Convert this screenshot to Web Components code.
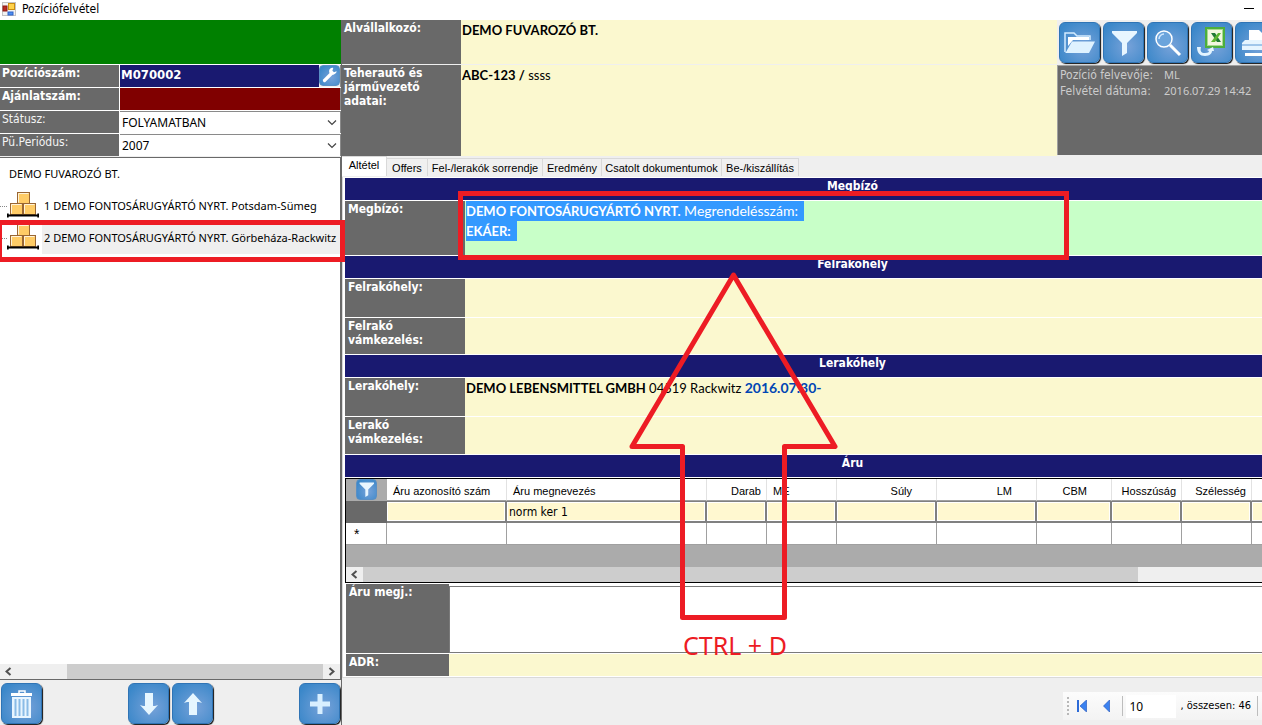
<!DOCTYPE html>
<html lang="hu">
<head>
<meta charset="utf-8">
<title>Pozíciófelvétel</title>
<style>
  html, body { margin: 0; height: 100%; }
  body { background: #efefef; overflow: hidden; }
  position-window {
    --label: #696969; --navy: #191970; --cream: #fbf8cf; --mint: #c8ffc8; --red: #ed1c24;
    --tahoma: "DejaVu Sans Condensed", "Noto Sans", sans-serif;
    --segoe: "Noto Sans", "Open Sans", sans-serif;
    --calibri: Lato, "Open Sans", sans-serif;
    --system: "Liberation Sans", Arial, sans-serif;
  }
</style>
</head>
<body>
<position-window></position-window>

<script>
const define = (name, html, setup) => {
  const template = document.createElement('template');
  template.innerHTML = `<style>*{box-sizing:border-box}</style>${html}`;
  customElements.define(name, class extends HTMLElement {
    constructor() {
      super();
      this.attachShadow({ mode: 'open' }).append(template.content.cloneNode(true));
    }
    connectedCallback() { if (setup) setup(this, this.shadowRoot); }
  });
};

/* Title bar */
define('title-bar', `
<style>
  :host { display: flex; align-items: center; gap: 6px; height: 20px; padding: 0 7px 2px 2px; background: #fff; color: #000; font: 12px/16px var(--tahoma); }
  span { flex: 1; }
  button { border: 0; padding: 0; background: none; width: 12px; height: 16px; display: grid; place-items: center; }
</style>
<svg width="14" height="14" viewBox="0 0 14 14" aria-hidden="true">
  <rect x=".5" y=".5" width="13" height="13" fill="#f2f2f2" stroke="#c3c3c3"/>
  <rect x="6.5" y="1.5" width="6" height="6" fill="#ffd24a" stroke="#c98c10"/>
  <rect x="1" y="4" width="4" height="5" fill="#b8281f" stroke="#8c1a14"/>
  <rect x="6" y="10" width="5" height="3" fill="#4f8ff0" stroke="#2c62c9"/>
</svg>
<span>Pozíciófelvétel</span>
<button aria-label="Kis méret"><svg width="10" height="2"><path d="M0 .5h10" stroke="#000"/></svg></button>`);

/* Glossy blue icon button */
define('icon-button', `
<style>
  :host { display: block; flex: none; width: 42px; height: 42px; padding: 0 1px 1px 0; }
  :host([small]) { width: 21px; height: 21px; padding: 0; }
  button { display: grid; place-items: center; width: 100%; height: 100%; padding: 0; border: 1px solid #2f74b5; border-radius: 6px;
    background: radial-gradient(circle at 60% 60%, #77a2d9, #3a87c9 85%); box-shadow: 1px 1px 1px #111; }
  :host([small]) button { border-radius: 4px; border-color: #5a8fc4; box-shadow: none; }
</style>
<button><slot></slot></button>`, (el, root) => root.querySelector('button').setAttribute('aria-label', el.getAttribute('label')));

/* Position header form */
define('position-form', `
<style>
  :host { display: block; background: #fff; color: #fff; }
  .banner { height: 44px; background: #008000; }
  form { display: grid; grid-template-columns: 119px 1fr; gap: 1px; padding-top: 1px; margin: 0; grid-auto-rows: 22px; }
  label { background: var(--label); padding-left: 2px; font: 12px/16px var(--tahoma); color: #f4f4f4; }
  label.strong { font-weight: bold; color: #fff; }
  .cell { display: flex; background: #efefef; min-width: 0; border-right: 1px solid #8a8a8a; }
  input { flex: 1; min-width: 0; border: 0; padding: 0 1px 2px; background: var(--navy); color: #fff; font: bold 13px/20px var(--tahoma); }
  input.quote { background: #800000; }
  .pick { display: grid; background: #fff; border: solid #8a8a8a; border-width: 1px 1px 0 0; }
  .pick > * { grid-area: 1 / 1; }
  .pick svg { place-self: center end; margin-right: 3px; pointer-events: none; }
  select { appearance: none; border: 0; background: none; padding: 0 2px; color: #000; font: 12px/20px var(--segoe); }
</style>
<div class="banner"></div>
<form>
  <label class="strong" for="pos">Pozíciószám:</label>
  <div class="cell"><input id="pos" value="M070002">
    <icon-button small label="Beállítás"><svg width="17" height="17" viewBox="0 0 17 17"><path d="M3.5 13.5l7-7" stroke="#fff" stroke-width="3.2" stroke-linecap="round"/><path d="M15.6 4.3l-2.6 1-1.6-1.5.9-2.8c-2-.6-4.3.8-4.2 3.2c0 2.5 2.5 4.1 4.8 3.3c1.8-.6 2.7-2 2.7-3.2z" fill="#fff"/></svg></icon-button></div>
  <label class="strong" for="quote">Ajánlatszám:</label>
  <div class="cell"><input class="quote" id="quote"></div>
  <label for="status">Státusz:</label>
  <div class="pick"><select id="status"><option>FOLYAMATBAN</option></select><svg width="10" height="6"><path d="M1 .5l4 4 4-4" fill="none" stroke="#444" stroke-width="1.2"/></svg></div>
  <label for="period">Pü.Periódus:</label>
  <div class="pick"><select id="period"><option>2007</option></select><svg width="10" height="6"><path d="M1 .5l4 4 4-4" fill="none" stroke="#444" stroke-width="1.2"/></svg></div>
</form>`);

/* Horizontal scroll bar */
define('scroll-strip', `
<style>
  :host { display: grid; height: 15px; background: #efefef; align-items: center; grid-template-columns: 17px var(--before, 0px) 1fr var(--after, 0px) auto; }
  .thumb { grid-column: 3; height: 100%; background: #cdcdcd; }
  svg { justify-self: center; }
  .right { grid-column: 5; width: 17px; display: grid; }
  :host([open-end]) .right { display: none; }
</style>
<svg width="7" height="9"><path d="M5.5 1l-4 3.5 4 3.5" fill="none" stroke="#505050" stroke-width="2"/></svg>
<div class="thumb"></div>
<div class="right"><svg width="7" height="9"><path d="M1.5 1l4 3.5-4 3.5" fill="none" stroke="#505050" stroke-width="2"/></svg></div>`);

/* One line of the cargo tree */
define('cargo-item', `
<style>
  :host { display: grid; grid-template-columns: 7px 32px 1fr; column-gap: 0; height: 32px; align-items: center; white-space: nowrap; }
  i { border-top: 1px dotted #888; width: 7px; }
  svg { align-self: start; }
  span { height: 100%; line-height: 32px; margin-left: 3px; padding-left: 2px; }
  :host([selected]) span { background: #efefef; }
</style>
<i></i>
<svg width="32" height="28" viewBox="0 0 32 28" aria-hidden="true">
  <g fill="#ffcc66" stroke="#996633"><rect x="10.5" y="2.5" width="12" height="11"/><rect x="3.5" y="13.5" width="12" height="11"/><rect x="16.5" y="13.5" width="12" height="11"/></g>
  <g fill="none" stroke="#fff3d8"><path d="M11.5 12.5v-9h10M4.5 23.5v-9h10M17.5 23.5v-9h10"/></g>
  <path d="M.8 23.5v4M31.2 23.5v4M0 25.5h32" stroke="#000" stroke-width="1.8"/>
</svg>
<span><slot></slot></span>`);

define('cargo-tree', `
<style>
  :host { display: flex; flex-direction: column; background: #fff; border: solid #696969; border-width: 1px 1px 1px 0; font: 11px/16px var(--segoe); color: #000; overflow: hidden; --before: 50px; }
  .root { height: 32px; line-height: 32px; padding-left: 9px; }
  .list { flex: 1; }
</style>
<div class="list">
  <div class="root">DEMO FUVAROZÓ BT.</div>
  <cargo-item>1 DEMO FONTOSÁRUGYÁRTÓ NYRT. Potsdam-Sümeg</cargo-item>
  <cargo-item selected>2 DEMO FONTOSÁRUGYÁRTÓ NYRT. Görbeháza-Rackwitz</cargo-item>
</div>
<scroll-strip></scroll-strip>`);

define('tree-actions', `
<style>
  :host { display: flex; align-items: flex-start; height: 44px; padding: 2px 0 0 1px; background: #efefef; gap: 2px; }
  .gap { flex: 1; }
</style>
<icon-button label="Törlés"><svg width="22" height="28" viewBox="0 0 22 28"><path d="M8 3.5V1h6v2.5" fill="none" stroke="#fff" stroke-width="1.5"/><rect y="3" width="21" height="3" fill="#fff"/><rect x="1" y="7" width="19" height="21" fill="#e8f5ff"/><path d="M4.5 9v17M8.5 9v17M12.5 9v17M16.5 9v17" stroke="#8abbe6" stroke-width="2"/></svg></icon-button>
<span class="gap"></span>
<icon-button label="Le"><svg width="18" height="24" viewBox="0 0 18 24"><path d="M5 1h8v13c2 0 4-.6 5-1L9 23 0 13c1 .4 3 1 5 1z" fill="#e6f6ff"/></svg></icon-button>
<icon-button label="Fel"><svg width="18" height="24" viewBox="0 0 18 24"><path d="M5 23h8V10c2 0 4 .6 5 1L9 1 0 11c1-.4 3-1 5-1z" fill="#e6f6ff"/></svg></icon-button>
<span class="gap"></span>
<icon-button label="Új"><svg width="20" height="20"><path d="M7.5 0h5v7.5H20v5h-7.5V20h-5v-7.5H0v-5h7.5z" fill="#d8efff"/></svg></icon-button>`);

/* Subcontractor block */
define('carrier-info', `
<style>
  :host { display: grid; grid-template-columns: 119px 1fr; grid-template-rows: 44px 91px; row-gap: 1px; background: #efefef; }
  .label { background: var(--label); color: #fff; font: bold 12px/14px var(--tahoma); padding: 1px 2px; }
  .value { background: var(--cream); color: #000; font: 13px/20px var(--calibri); padding: 0 1px; white-space: pre; }
</style>
<div class="label">Alvállalkozó:</div><div class="value"><b>DEMO FUVAROZÓ BT.</b></div>
<div class="label">Teherautó és járművezető adatai:</div><div class="value"><b>ABC-123 /</b> ssss</div>`);

define('record-tools', `
<style>
  :host { display: grid; grid-template-rows: 44px 91px; row-gap: 1px; background: #efefef; overflow: hidden; }
  .bar { display: flex; gap: 2px; padding: 2px; }
  dl { display: grid; grid-template-columns: 101px 1fr; grid-auto-rows: 16px; margin: 0 0 1px; padding: 1px 2px; background: var(--label); border: solid #a0a0a0; border-width: 1px 0 0 1px; color: #ccc; font: 12px/16px var(--tahoma); white-space: nowrap; }
  dt, dd { margin: 0; } dd { font: 11px/16px var(--segoe); padding-left: 3px; }
</style>
<div class="bar">
  <icon-button label="Megnyitás"><svg width="32" height="22" viewBox="0 0 32 22"><path d="M1 20V1h9l3 3h13v4" fill="none" stroke="#d3ecff" stroke-width="1.5"/><path d="M4 14V5h21v3H9z" fill="#fff"/><path d="M2 20L8 9.5h23L25 21H1z" fill="#dff2ff"/></svg></icon-button>
  <icon-button label="Szűrés"><svg width="26" height="26" viewBox="0 0 26 26"><path d="M1 1h25v2L16 13v10l-5 3V13L1 3z" fill="#e8f6ff"/></svg></icon-button>
  <icon-button label="Keresés"><svg width="28" height="28" viewBox="0 0 28 28"><circle cx="10" cy="10" r="8" fill="#6ba4dc" stroke="#fff" stroke-width="1.5"/><path d="M5 10a5 5 0 0 1 5-5" fill="none" stroke="#cfe8ff" stroke-width="1.5"/><path d="M16 16l10 10" stroke="#fff" stroke-width="3"/></svg></icon-button>
  <icon-button label="Excel export"><svg width="30" height="32" viewBox="0 0 30 32"><rect x="9" y="1" width="18" height="19" fill="#f1f7df" stroke="#4caf3c" stroke-width="2"/><rect x="10.5" y="2.5" width="15" height="16" fill="none" stroke="#a8d98e"/><path d="M14 6h4l6 9h-4z" fill="#1f7a34"/><path d="M21 6h3l-6 9h-4z" fill="#5cb531"/><path d="M0 20c0 6 3 9 8 9 5 0 7-3 7-5h2l-1-4-6 3 2 1c0 1-1 2-4 2-4 0-5-2-4-6z" fill="#e3f4ff"/></svg></icon-button>
  <icon-button label="Nyomtatás"><svg width="30" height="28" viewBox="0 0 30 28"><path d="M8 11V1h10l4 4v6z" fill="#fff"/><path d="M4 11h22l3 3v7H1v-7z" fill="#e6f5ff"/><path d="M1 16h28" stroke="#5a98d6"/><path d="M4 24h22v3H4z" fill="#fff"/></svg></icon-button>
</div>
<dl><dt>Pozíció felvevője:</dt><dd>ML</dd><dt>Felvétel dátuma:</dt><dd>2016.07.29 14:42</dd></dl>`);

/* Tabs */
define('tab-strip', `
<style>
  :host { display: grid; grid-template-columns: 45px 41px 115px 59px 120px 77px; align-items: end; height: 20px; background: #efefef; font: 11px/16px var(--system); }
  button { height: 18px; border: 1px solid #d9d9d9; border-left: 0; border-bottom: 0; background: #f0f0f0; color: #000; padding: 0; font: inherit; white-space: nowrap; }
  button[aria-selected=true] { height: 20px; background: #fff; padding-bottom: 3px; }
</style>
<button role="tab" aria-selected="true">Altétel</button><button role="tab">Offers</button><button role="tab">Fel-/lerakók sorrendje</button><button role="tab">Eredmény</button><button role="tab">Csatolt dokumentumok</button><button role="tab">Be-/kiszállítás</button>`);

/* Navy section heading; the sheet continues past the window, so its centre sits right of ours */
define('section-bar', `
<style>
  :host { display: block; height: 22px; padding-left: 98px; background: var(--navy); color: #fff; font: bold 12px/16px var(--tahoma); text-align: center; overflow: hidden; }
</style><slot></slot>`);

define('field-row', `
<style>
  :host { display: grid; grid-template-columns: 120px 1fr; height: var(--h, 38px); }
  .label { background: var(--label); color: #fff; font: bold 12px/14px var(--tahoma); padding: 1px 3px; }
  .value { background: var(--fill, var(--cream)); color: #000; font: 13px/20px var(--calibri); padding-left: 1px; }
</style>
<div class="label"></div><div class="value"><slot></slot></div>`, (el, root) => root.querySelector('.label').textContent = el.getAttribute('label'));

/* Goods grid */
define('goods-table', `
<style>
  :host { display: block; overflow: hidden; border: solid #000; border-width: 1px 0 1px 1px; background: #ababab; --after: 124px; }
  table { border-collapse: separate; border-spacing: 0; table-layout: fixed; width: 1008px; font: 11px/16px var(--system); color: #000; }
  th { height: 22px; background: #fff; border: solid #e2e2e2; border-width: 0 1px 0 0; border-bottom: 1px solid #a0a0a0; font-weight: normal; text-align: right; padding: 2px 24px 0 6px; white-space: nowrap; }
  th.text { text-align: left; }
  th.tight { padding-right: 5px; }
  th.corner { background: #ababab; padding: 0 0 0 10px; border-color: #ababab; }
  td { height: 22px; padding: 0 1px; background: #fff; border: solid #a0a0a0; border-width: 0 1px 1px 0; }
  .current td { background: #fff8d0; border: solid #808080; border-width: 1px 2px 2px 0; box-shadow: inset 0 0 0 1px #fff; font: 12px/16px var(--tahoma); padding: 0 2px; }
  .current td.head { background: var(--label); border-color: var(--label); box-shadow: none; }
  td.star { text-align: left; padding-left: 8px; font-size: 14px; line-height: 12px; }
  .free { height: 22px; }
</style>
<table>
  <colgroup><col style="width:41px"><col style="width:120px"><col style="width:200px"><col style="width:60px"><col style="width:70px"><col style="width:100px"><col style="width:100px"><col style="width:75px"><col style="width:70px"><col style="width:70px"><col style="width:102px"></colgroup>
  <tr><th class="corner"><icon-button small label="Szűrés"><svg width="15" height="15" viewBox="0 0 26 26"><path d="M1 1h25v2L16 13v10l-5 3V13L1 3z" fill="#e8f6ff"/></svg></icon-button></th>
    <th class="text">Áru azonosító szám</th><th class="text">Áru megnevezés</th><th class="tight">Darab</th><th class="text">ME</th><th>Súly</th><th>LM</th><th>CBM</th><th class="tight">Hosszúság</th><th class="tight">Szélesség</th><th></th></tr>
  <tr class="current"><td class="head"></td><td></td><td>norm ker 1</td><td></td><td></td><td></td><td></td><td></td><td></td><td></td><td></td></tr>
  <tr><td class="star">*</td><td></td><td></td><td></td><td></td><td></td><td></td><td></td><td></td><td></td><td></td></tr>
</table>
<div class="free"></div>
<scroll-strip open-end></scroll-strip>`);

define('goods-notes', `
<style>
  :host { display: grid; grid-template-columns: 103px 1fr; grid-template-rows: 1fr 22px; row-gap: 1px; padding-left: 1px; background: #fff; }
  label { background: var(--label); color: #fff; font: bold 12px/16px var(--tahoma); padding: 0 3px; }
  textarea { border: 1px solid #7a7a7a; border-right: 0; margin-top: 2px; padding: 2px; resize: none; min-width: 0; font: 12px/16px var(--tahoma); background: #fff; }
  input { border: 0; background: var(--cream); min-width: 0; width: 100%; }
</style>
<label for="note">Áru megj.:</label><textarea id="note"></textarea>
<label for="adr">ADR:</label><input id="adr">`);

/* Record navigator */
define('record-pager', `
<style>
  :host { display: flex; align-items: center; height: 28px; padding: 0 4px; background: linear-gradient(#fcfcfc, #f3f3f3); font: 11px/16px var(--tahoma); color: #000; }
  .grip { width: 2px; height: 19px; background: repeating-linear-gradient(#b8b8b8 0 2px, transparent 2px 4px); }
  button { border: 0; background: none; padding: 0; width: 25px; height: 22px; display: grid; place-items: center; }
  hr { width: 1px; height: 20px; border: 0; margin: 0; background: #bdbdbd; }
  hr.first { margin-left: 3px; }
  input { width: 50px; height: 23px; margin: 0 4px 0 3px; border: 0; padding: 0 3px; background: #fff; font: 12px/16px var(--segoe); }
  span { margin-right: 6px; white-space: nowrap; }
</style>
<div class="grip"></div>
<button aria-label="Első"><svg width="11" height="12"><path d="M1 0h2v12H1z" fill="#2d6bd8"/><path d="M10.5 0v12L4 6z" fill="#3b82f0" stroke="#1b4fb8" stroke-width=".6"/></svg></button>
<button aria-label="Előző"><svg width="7" height="12"><path d="M6.5 0v12L.5 6z" fill="#3b82f0" stroke="#1b4fb8" stroke-width=".6"/></svg></button>
<hr class="first"><input aria-label="Rekord" value="10"><span>, összesen: 46</span><hr>`);

/* Red call-out drawing over the form */
define('hint-overlay', `
<style>
  :host { position: absolute; inset: 0; pointer-events: none; overflow: hidden; }
  svg { display: block; width: 1262px; height: 725px; }
  text { font: 25px var(--segoe); fill: var(--red); }
  g { fill: none; stroke: var(--red); stroke-width: 5; }
</style>
<svg viewBox="0 0 1262 725">
  <g><rect x="-.5" y="222.5" width="343" height="37"/><rect x="460.5" y="193.5" width="606" height="64"/>
  <path d="M733.5 275L835 446.5H784.5V617.5H682.5V446.5H632z" stroke-linejoin="round"/></g>
  <text x="683" y="655">CTRL + D</text>
</svg>`);

define('position-window', `
<style>
  :host { position: relative; display: grid; grid-template-rows: auto 1fr; height: 100%; overflow: hidden; background: #efefef; }
  main { display: grid; grid-template-columns: 341px minmax(0, 1fr); min-height: 0; }
  aside { display: grid; grid-template-rows: auto 1fr auto; row-gap: 1px; min-height: 0; }
  .work { display: flex; flex-direction: column; border-left: 1px solid #696969; min-width: 0; }
  .head { display: grid; grid-template-columns: minmax(0, 1fr) 205px; }
  .sheet { display: grid; row-gap: 1px; margin-top: 1px; padding: 1px 0 1px 2px; background: #fff; border: solid #d9d9d9; border-width: 0 0 1px 1px; flex: 1; grid-template-rows: repeat(10, auto) 1fr; }
  .marked { background: #3399ff; color: #fff; display: inline-block; height: 20px; padding-right: 6px; font-size: 14px; }
  .marked b { font-size: 13px; }
  .date { color: #0046b4; font-size: 14px; }
  footer { display: flex; justify-content: flex-end; padding: 14px 0 5px; }
</style>
<title-bar></title-bar>
<main>
  <aside><position-form></position-form><cargo-tree></cargo-tree><tree-actions></tree-actions></aside>
  <div class="work">
    <div class="head"><carrier-info></carrier-info><record-tools></record-tools></div>
    <tab-strip></tab-strip>
    <div class="sheet">
      <section-bar>Megbízó</section-bar>
      <field-row label="Megbízó:" style="--h:54px;--fill:var(--mint)"><span class="marked"><b>DEMO FONTOSÁRUGYÁRTÓ NYRT.</b> Megrendelésszám:</span><br><span class="marked"><b>EKÁER:</b></span></field-row>
      <section-bar>Felrakóhely</section-bar>
      <field-row label="Felrakóhely:"></field-row>
      <field-row label="Felrakó vámkezelés:" style="--h:36px"></field-row>
      <section-bar>Lerakóhely</section-bar>
      <field-row label="Lerakóhely:"><b>DEMO LEBENSMITTEL GMBH</b> 04519 Rackwitz <b class="date">2016.07.30-</b></field-row>
      <field-row label="Lerakó vámkezelés:" style="--h:37px"></field-row>
      <section-bar>Áru</section-bar>
      <goods-table></goods-table>
      <goods-notes></goods-notes>
    </div>
    <footer><record-pager></record-pager></footer>
  </div>
</main>
<hint-overlay></hint-overlay>`);
</script>
</body>
</html>
